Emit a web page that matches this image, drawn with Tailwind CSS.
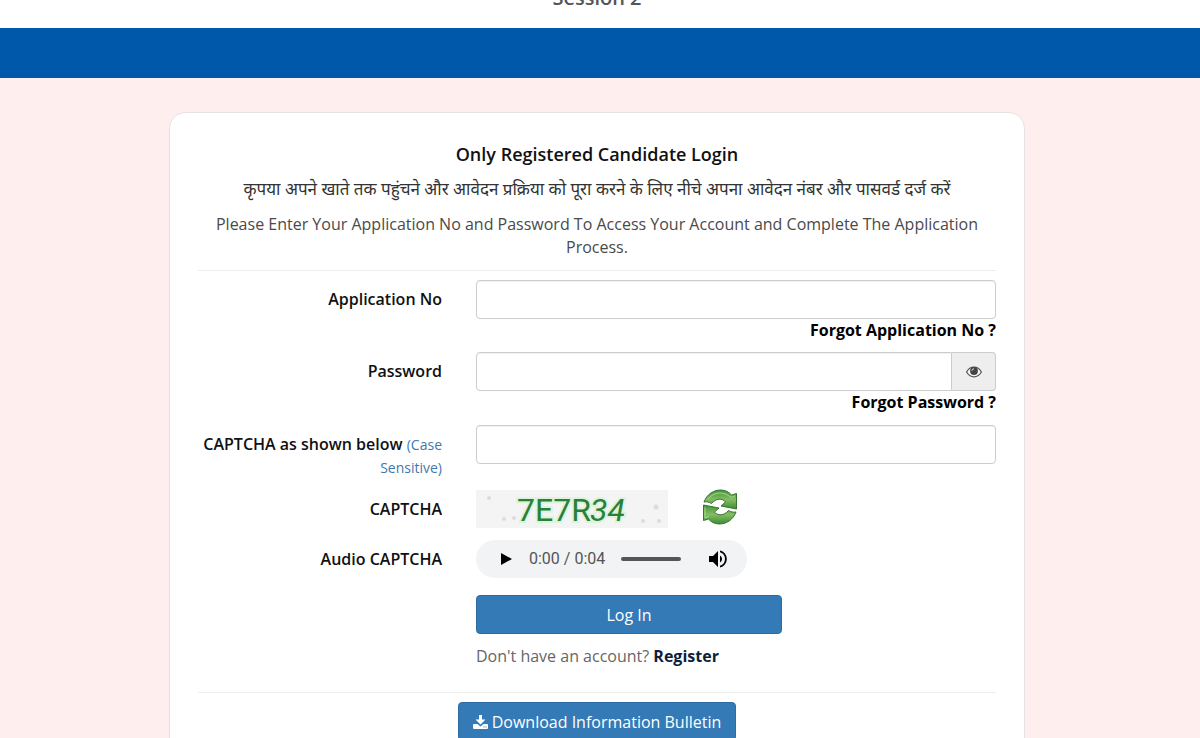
<!DOCTYPE html>
<html lang="en">
<head>
<meta charset="utf-8">
<meta name="viewport" content="width=device-width, initial-scale=1">
<title>Candidate Login</title>
<script src="https://cdn.jsdelivr.net/npm/@tailwindcss/browser@4"></script>
</head>
<body class="min-h-screen bg-[#ffeeee] font-['Open_Sans','Noto_Sans',sans-serif] text-base text-[#4a4a4a]">
<header class="flex h-7 items-end justify-center overflow-hidden bg-white pr-1.5 pb-4">
  <p class="text-xl font-semibold text-[#555555]">Session 2</p>
</header>
<nav class="h-[50px] bg-[#0058ab]" aria-label="Main"></nav>

<main class="pt-[34px] pr-1.5">
  <section class="mx-auto max-w-[856px] rounded-2xl border border-[#e6e2e4] bg-white px-7 pt-[27px] pb-8">
    <div class="text-center">
      <h1 class="text-lg leading-7 font-semibold text-[#111111]">Only Registered Candidate Login</h1>
      <p lang="hi" class="mt-[9px] text-[17px] leading-6 text-[#333333]">कृपया अपने खाते तक पहुंचने और आवेदन प्रक्रिया को पूरा करने के लिए नीचे अपना आवेदन नंबर और पासवर्ड दर्ज करें</p>
      <p class="mt-3 px-4 leading-[23px]">Please Enter Your Application No and Password To Access Your Account and Complete The Application Process.</p>
    </div>
    <hr class="mt-[11px] mb-[9px] border-[#eeeeee]">

    <form class="grid grid-cols-[244px_minmax(0,1fr)] gap-x-[34px]">
      <label for="app" class="pt-2 text-right leading-[23px] font-semibold text-[#111111]">Application No</label>
      <div class="flex flex-col">
        <input id="app" type="text" class="h-[39px] w-full rounded border border-[#cccccc] px-3 inset-shadow-2xs">
        <a href="#" class="self-end leading-[23px] font-bold text-black">Forgot Application No ?</a>
      </div>

      <label for="pwd" class="mt-2.5 pt-2 text-right leading-[23px] font-semibold text-[#111111]">Password</label>
      <div class="mt-2.5 flex flex-col">
        <div class="flex">
          <input id="pwd" type="password" class="h-[39px] min-w-0 flex-1 rounded-l border border-[#cccccc] px-3 inset-shadow-2xs">
          <button type="button" aria-label="Show password" class="flex w-11 items-center justify-center rounded-r border border-l-0 border-[#cccccc] bg-[#eeeeee]">
            <svg width="16" height="12" viewBox="0 0 16 12"><path d="M.6 6C2.4 2.7 5 1.2 8 1.2S13.6 2.7 15.4 6C13.6 9.3 11 10.8 8 10.8S2.4 9.3.6 6Z" fill="#f5f5f5" stroke="#555" stroke-width="1.2"/><circle cx="8" cy="5" r="3.9" fill="#444"/><path d="M5.9 4.8A2.2 2.2 0 0 1 8 2.7" fill="none" stroke="#ddd" stroke-width="1"/></svg>
          </button>
        </div>
        <a href="#" class="self-end leading-[23px] font-bold text-black">Forgot Password ?</a>
      </div>

      <label for="cap" class="mt-[11px] pt-2 text-right leading-[23px] font-semibold text-[#111111]">CAPTCHA as shown below <span class="text-sm leading-5 font-normal text-[#3f78ae]">(Case Sensitive)</span></label>
      <div class="mt-[11px]">
        <input id="cap" type="text" class="h-[39px] w-full rounded border border-[#cccccc] px-3 inset-shadow-2xs">
      </div>

      <div class="mt-[11px] pt-2 text-right leading-[23px] font-semibold text-[#111111]">CAPTCHA</div>
      <div class="mt-[11px] flex h-[38px] items-center gap-[34px]">
        <svg width="192" height="38" viewBox="0 0 192 38" role="img" aria-label="CAPTCHA image">
          <rect width="192" height="38" fill="#f4f4f4"/>
          <g fill="#dcdcdc"><circle cx="13" cy="8" r="2"/><circle cx="28" cy="29" r="2"/><circle cx="38" cy="28" r="2"/><circle cx="167" cy="31" r="2"/><circle cx="180" cy="17" r="2.5"/><circle cx="183" cy="31" r="2"/></g>
          <g font-family="Roboto" font-size="32" fill="#dcf3dc" stroke="#dcf3dc" stroke-width="4"><text x="41" y="31">7E7R</text><text x="114" y="31" font-style="italic">34</text></g>
          <g font-family="Roboto" font-size="32" fill="#2b8038"><text x="41" y="31">7E7R</text><text x="114" y="31" font-style="italic">34</text></g>
        </svg>
        <button type="button" aria-label="Refresh CAPTCHA" class="-mt-1">
          <svg width="36" height="36" viewBox="0 0 36 36">
            <defs><linearGradient id="g" x1="0" y1="0" x2="0" y2="1"><stop offset="0" stop-color="#43923a"/><stop offset=".5" stop-color="#83bd62"/><stop offset="1" stop-color="#3c8b34"/></linearGradient></defs>
            <g fill="url(#g)" stroke="#36752f" stroke-width="1" stroke-linejoin="round">
              <path d="M2 13C5 5 12 .8 19 1C23.5 1.2 27 3 29.5 6L34.5 4.5V20L19 17L23.5 13C20.500 9 14 9 9.5 14.5C7 13 4.500 12.500 2 13Z"/>
              <path d="M34 23C31 31 24 35.2 17 35C12.5 34.8 9 33 6.5 30L1.5 31.500V16L17 19L12.5 23C15.500 27 22 27 26.5 21.500C29 23 31.500 23.500 34 23Z"/>
            </g>
            <path d="M6 10C12 2.5 22 2 29 8.5L33 7" fill="none" stroke="#a9d68c" stroke-width="1"/>
            <path d="M3 18.500V29L7 27.500" fill="none" stroke="#a9d68c" stroke-width="1"/>
          </svg>
        </button>
      </div>

      <div class="mt-3 pt-2 text-right leading-[23px] font-semibold text-[#111111]">Audio CAPTCHA</div>
      <div class="mt-3 flex h-[38px] w-[271px] items-center rounded-full bg-[#f1f3f4] pr-5 pl-6">
        <button type="button" aria-label="Play"><svg width="12" height="14" viewBox="0 0 12 14"><path d="M1 1L12 7L1 13Z" fill="#000"/></svg></button>
        <span class="ml-[17px] font-[Roboto,sans-serif] text-base text-[#555555]">0:00 / 0:04</span>
        <input type="range" value="0" aria-label="Seek" class="mx-4 h-1 w-0 min-w-0 flex-1 appearance-none rounded-full bg-[#555555] [&::-webkit-slider-thumb]:appearance-none">
        <button type="button" aria-label="Mute" class="ml-3"><svg width="18" height="18" viewBox="0 0 18 18"><path d="M0 6H4L9 1V17L4 12H0Z" fill="#000"/><path d="M11 5.5A4 4 0 0 1 11 12.5ZM11 .5V2.3A7 7 0 0 1 11 15.7V17.5A8.7 8.7 0 0 0 11 .5Z" fill="#000"/></svg></button>
      </div>

      <div class="col-start-2 mt-[17px]">
        <button type="submit" class="block h-[39px] w-[306px] max-w-full rounded border border-[#2e6da4] bg-[#337ab7] text-white">Log In</button>
        <p class="mt-[11px] leading-[23px] text-[#666666]">Don't have an account? <a href="#" class="font-bold text-[#0d1f3c]">Register</a></p>
      </div>
    </form>

    <hr class="mt-6 mb-[9px] border-[#eeeeee]">
    <div class="flex justify-center">
      <a href="#" class="flex h-[39px] items-center gap-1 rounded border border-[#2e6da4] bg-[#337ab7] px-3.5 text-white">
        <svg width="15" height="14" viewBox="0 0 15 14" fill="#fff"><path d="M6 0H9V4.5H12.5L7.5 9.5L2.5 4.5H6Z"/><path fill-rule="evenodd" d="M1 9H4.500L7.500 11.500L10.500 9H14Q15 9 15 10V13Q15 14 14 14H1Q0 14 0 13V10Q0 9 1 9ZM10.500 11.500V12.500H11.500V11.500ZM12.500 11.500V12.500H13.500V11.500Z"/></svg>
        Download Information Bulletin
      </a>
    </div>
  </section>
</main>
</body>
</html>
